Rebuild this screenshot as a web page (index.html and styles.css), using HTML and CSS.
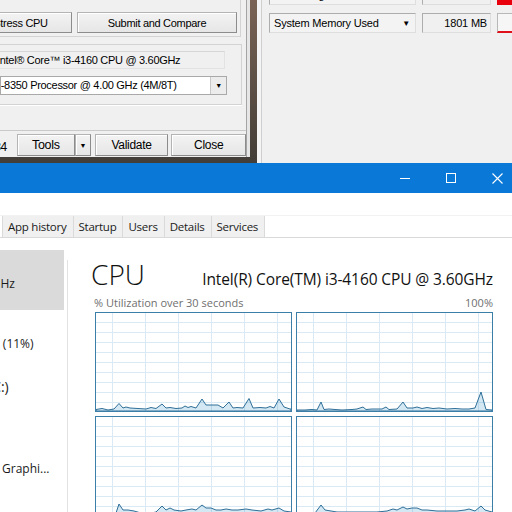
FILE: index.html
```html
<!DOCTYPE html>
<html lang="en">
<head>
    <meta charset="UTF-8">
    <title>CPU Benchmark</title>
    <link rel="stylesheet" href="styles.css">
</head>
<body>
    <div class="top">
        <div class="cpuz">
            <div class="cpuz-client">
                <div class="bench">
                    <button class="btn btn-stress">Stress CPU</button>
                    <button class="btn btn-submit">Submit and Compare</button>
                </div>

                <div class="reference">
                    <div class="ro-field">Intel® Core™ i3-4160 CPU @ 3.60GHz</div>
                    <div class="combo">
                        <span class="combo-text">AMD FX-8350 Processor @ 4.00 GHz (4M/8T)</span>
                        <span class="combo-arrow">&#9660;</span>
                    </div>
                </div>

                <div class="footer-row">
                    <span class="version">Ver. 1.84</span>
                    <button class="btn btn-tools">Tools</button>
                    <button class="btn btn-split">&#9660;</button>
                    <button class="btn btn-validate">Validate</button>
                    <button class="btn btn-close">Close</button>
                </div>
            </div>
        </div>

        <div class="hwmon">
            <div class="hwmon-client">
                <div class="hw-row hw-row-cut">
                    <div class="hw-combo">CPU Usage</div>
                    <div class="hw-value">4 %</div>
                    <div class="hw-color filled"></div>
                </div>
                <div class="hw-row">
                    <div class="hw-combo">System Memory Used <span class="hw-arrow">&#9660;</span></div>
                    <div class="hw-value">1801 MB</div>
                    <div class="hw-color"></div>
                </div>
            </div>
        </div>
    </div>

    <div class="tm">
        <div class="tm-title">
            <div class="tm-controls">
                <div class="tm-btn">
                    <svg width="10" height="10" viewBox="0 0 10 10"><path d="M0 5.5h10" stroke="#fff" stroke-width="1"/></svg>
                </div>
                <div class="tm-btn">
                    <svg width="10" height="10" viewBox="0 0 10 10"><rect x="0.5" y="0.5" width="9" height="9" fill="none" stroke="#fff" stroke-width="1"/></svg>
                </div>
                <div class="tm-btn">
                    <svg width="11" height="11" viewBox="0 0 11 11"><path d="M0.5 0.5l10 10M10.5 0.5l-10 10" stroke="#fff" stroke-width="1.1"/></svg>
                </div>
            </div>
        </div>
        <div class="tm-menu"></div>
        <div class="tm-tabs">
            <div class="tab">App history</div>
            <div class="tab">Startup</div>
            <div class="tab">Users</div>
            <div class="tab">Details</div>
            <div class="tab">Services</div>
        </div>

        <div class="tm-body">
            <div class="side">
                <div class="side-item selected">
                    <div class="side-title">CPU</div>
                    <div class="side-sub">4%  3.60 GHz</div>
                </div>
                <div class="side-item mem">
                    <div class="side-title">Memory</div>
                    <div class="side-sub">1.8/7.9 GB (11%)</div>
                </div>
                <div class="side-item">
                    <div class="side-title">Disk 0 (C:)</div>
                    <div class="side-sub">0%</div>
                </div>
                <div class="side-item gpu">
                    <div class="side-title">GPU 0</div>
                    <div class="side-sub">Intel(R) HD Graphi...</div>
                </div>
            </div>

            <div class="main">
                <div class="main-head">
                    <span class="main-title">CPU</span>
                    <span class="main-model">Intel(R) Core(TM) i3-4160 CPU @ 3.60GHz</span>
                </div>
                <div class="main-sub">
                    <span>% Utilization over 30 seconds</span>
                    <span>100%</span>
                </div>

                <div class="graphs">
                    <div class="graph">
                        <svg viewBox="0 0 195 98" preserveAspectRatio="none">
                            <polygon class="area" points="0,96.5 6,95.5 12,97 18,96 23,90.5 27,95 30,94 34,95 42,95.5 50,96 55,94.5 60,95.5 66,91 70,95 74,94.5 80,95.5 86,95 89,93 92,94.5 95,93.5 100,95 106,86 110,92 115,92 122,92 127,95 133,89 137,95 141,94.5 147,95 153,85.5 157,95 164,94.5 170,95 174,93.5 178,95 183,86 188,94 194,96 195,96 195,98 0,98"/>
                        </svg>
                    </div>
                    <div class="graph">
                        <svg viewBox="0 0 195 98" preserveAspectRatio="none">
                            <polygon class="area" points="0,97 8,97 15,96.5 20,97 24,89 27,96.5 32,96 38,96.5 45,97 55,96.5 60,96 66,94 69,96.5 75,96 85,96 89,94 92,96.5 100,96 106,89 110,95 116,95 120,94 125,95.5 130,94.5 136,95.5 142,95 150,96 158,95.5 165,96 172,96 178,95 184,79 189,96.5 195,97 195,98 0,98"/>
                        </svg>
                    </div>
                    <div class="graph">
                        <svg viewBox="0 0 195 98" preserveAspectRatio="none">
                            <polygon class="area" points="0,96 8,96 15,96 20,96 23,87 27,93 32,93 38,94 45,96 55,96 60,95 66,89 70,93 74,91 78,93 85,94 90,93 96,92 100,93 106,88 110,91 115,91 120,93 125,93 130,92 136,93 142,93 150,92 156,93 165,94 172,92 176,93 183,91 188,94 195,95 195,98 0,98"/>
                        </svg>
                    </div>
                    <div class="graph">
                        <svg viewBox="0 0 195 98" preserveAspectRatio="none">
                            <polygon class="area" points="0,96 10,96 18,96 24,88 28,93 34,94 40,95 50,95 60,95 70,95 80,95 90,94 96,92 100,93 106,90 110,92 115,91 120,91 125,93 130,93 140,94 150,94 160,94 168,93 172,92 178,94 184,89 188,93 195,95 195,98 0,98"/>
                        </svg>
                    </div>
                </div>
            </div>
        </div>
    </div>
</body>
</html>
```

FILE: styles.css
```css
* {
    box-sizing: border-box;
}

body {
    margin: 0;
    width: 512px;
    height: 512px;
    overflow: hidden;
    background: linear-gradient(180deg, #7a6354 0%, #3d3a35 35%, #2c302b 70%, #6b5648 100%);
    font-family: "Liberation Sans", Arial, sans-serif;
    color: #000;
}

/* ---------- desktop windows on top ---------- */

.top {
    display: flex;
    gap: 7px;
    height: 163px;
}

.cpuz {
    flex: none;
    width: 250px;
    height: 157px;
    background: #e6e6e6;
    padding-right: 3px;
    overflow: hidden;
}

.cpuz-client {
    height: 100%;
    background: #f0f0f0;
    border-right: 1px solid #a4a4a4;
    font-size: 11px;
    letter-spacing: -0.3px;
}

.btn {
    font-family: inherit;
    font-size: 11px;
    letter-spacing: -0.3px;
    color: #000;
    background: linear-gradient(#f3f3f3, #e6e6e6);
    border: 1px solid #b4b4b4;
    border-right-color: #8c8c8c;
    border-bottom-color: #8c8c8c;
    box-shadow: inset 1px 1px 0 #fff;
    padding: 0;
    height: 21px;
}

.bench {
    display: flex;
    gap: 5px;
    width: 241px;
    height: 37px;
    padding-top: 12px;
    border-right: 1px solid #d3d3d3;
    border-bottom: 1px solid #d3d3d3;
}

.btn-stress {
    width: 103px;
    margin-left: -31px;
}

.btn-submit {
    width: 160px;
}

.reference {
    width: 242px;
    height: 61px;
    margin-top: 7px;
    padding-top: 6px;
    border: 1px solid #d3d3d3;
    border-left: none;
    box-shadow: 0 1px 0 #fff;
}

.ro-field {
    width: 229px;
    height: 18px;
    line-height: 16px;
    margin-left: -4px;
    border: 1px solid #e2e2e2;
    border-top-color: #d6d6d6;
    white-space: nowrap;
    overflow: hidden;
    font-size: 11px;
}

.combo {
    display: flex;
    width: 227px;
    height: 19px;
    margin-top: 7px;
    background: #fff;
    border: 1px solid #a9a9a9;
    overflow: hidden;
}

.combo-text {
    flex: 1;
    white-space: nowrap;
    line-height: 17px;
    margin-left: -40px;
    font-size: 11px;
}

.combo-arrow {
    flex: none;
    width: 16px;
    background: #ececec;
    border-left: 1px solid #c8c8c8;
    font-size: 7px;
    line-height: 17px;
    text-align: center;
}

.footer-row {
    display: flex;
    align-items: center;
    height: 26px;
    margin-top: 25px;
    padding-top: 3px;
    border-top: 1px solid #c9c9c9;
}

.version {
    flex: none;
    width: 65px;
    margin-left: -48px;
    margin-top: 4px;
    padding-right: 10px;
    white-space: nowrap;
    text-align: right;
    font-size: 12px;
}

.btn-tools {
    width: 58px;
    height: 22px;
    font-size: 12.5px;
}

.btn-split {
    width: 16px;
    height: 22px;
    font-size: 7px;
}

.btn-validate {
    width: 74px;
    height: 22px;
    margin-left: 4px;
    font-size: 12px;
}

.btn-close {
    width: 75px;
    height: 22px;
    margin-left: 3px;
    font-size: 12px;
}

.hwmon {
    flex: 1;
    min-width: 0;
    height: 163px;
    background: #f4f4f4;
    padding-left: 4px;
}

.hwmon-client {
    height: 100%;
    border-left: 1px solid #cfcfcf;
    background: #f0f0f0;
    padding-left: 7px;
    overflow: hidden;
    font-size: 11px;
    letter-spacing: -0.2px;
}

.hw-row {
    display: flex;
    gap: 6px;
    height: 20px;
    margin-top: 8px;
}

.hw-row-cut {
    margin-top: -15px;
}

.hw-combo {
    flex: none;
    width: 147px;
    display: flex;
    justify-content: space-between;
    align-items: center;
    padding: 0 5px 0 4px;
    background: #f3f3f3;
    border: 1px solid #adadad;
    border-right-color: #dedede;
    border-bottom-color: #dedede;
}

.hw-arrow {
    font-size: 8px;
}

.hw-value {
    flex: none;
    width: 69px;
    text-align: right;
    padding-right: 3px;
    line-height: 18px;
    border: 1px solid #adadad;
    border-right-color: #dedede;
    border-bottom-color: #dedede;
}

.hw-color {
    flex: none;
    width: 24px;
    border: 1px solid #b8b8b8;
    border-bottom: 2px solid #e0101a;
    background: #f6f6f6;
}

.hw-color.filled {
    background: #e8000d;
    border-color: #e8000d;
}

/* ---------- task manager ---------- */

.tm {
    height: 349px;
    background: #fff;
    font-family: "Open Sans", "Noto Sans", sans-serif;
}

.tm-title {
    height: 30px;
    background: #0a78d7;
    display: flex;
    justify-content: flex-end;
}

.tm-controls {
    display: flex;
    margin-right: -8px;
}

.tm-btn {
    width: 46px;
    height: 30px;
    display: flex;
    align-items: center;
    justify-content: center;
}

.tm-menu {
    height: 23px;
    border-bottom: 1px solid #f2f2f2;
}

.tm-tabs {
    display: flex;
    height: 22px;
    padding-left: 2px;
    border-bottom: 1px solid #d9d9d9;
    font-size: 11.5px;
    letter-spacing: -0.25px;
}

.tab {
    padding: 0 6px 0 5px;
    line-height: 21px;
    background: #f0f0f0;
    border-left: 1px solid #dadada;
    color: #1a1a1a;
}

.tab:last-child {
    border-right: 1px solid #dadada;
}

.tm-body {
    display: flex;
}

.side {
    width: 67px;
    flex: none;
    padding-top: 12px;
    overflow: hidden;
}

.side-item {
    width: 64px;
    height: 60px;
    padding-top: 8px;
    white-space: nowrap;
    color: #1a1a1a;
}

.side-item.selected {
    background: #dadada;
}

.side-item.gpu {
    padding-top: 13px;
}

.side-title {
    font-size: 14px;
    line-height: 18px;
    margin-left: -55px;
}

.side-sub {
    font-size: 12px;
    line-height: 16px;
    margin-left: -55px;
}

.side-item.mem .side-sub {
    margin-left: -58px;
}

.side-item.gpu .side-sub {
    margin-left: -61px;
}

.main {
    flex: 1;
    margin-top: 22px;
    border-left: 1px solid #e2e2e2;
    padding: 0 19px 0 23px;
}

.main-head {
    display: flex;
    justify-content: space-between;
    align-items: baseline;
    height: 34px;
    margin-top: -3px;
}

.main-title {
    font-size: 28px;
    font-weight: 300;
    line-height: 34px;
    color: #111;
}

.main-model {
    font-size: 15.5px;
    letter-spacing: -0.1px;
    color: #111;
}

.main-sub {
    display: flex;
    justify-content: space-between;
    margin-left: 3px;
    margin-top: 5px;
    font-size: 11px;
    line-height: 14px;
    color: #6f6f6f;
}

.graphs {
    display: grid;
    grid-template-columns: 1fr 1fr;
    grid-auto-rows: 100px;
    gap: 4px;
    margin-left: 4px;
    margin-top: 2px;
}

.graph {
    border: 1px solid #3b7ea8;
    background-color: #fff;
    background-image:
        linear-gradient(to right, #d9eaf4 1px, transparent 1px),
        linear-gradient(to bottom, #d9eaf4 1px, transparent 1px);
    background-size: 33px 100%, 100% 10px;
    background-position: 16px 0, 0 9px;
}

.graph svg {
    display: block;
    width: 100%;
    height: 100%;
}

.area {
    fill: rgba(17, 125, 187, 0.18);
    stroke: #2f6f98;
    stroke-width: 1;
    stroke-linejoin: round;
}
```
